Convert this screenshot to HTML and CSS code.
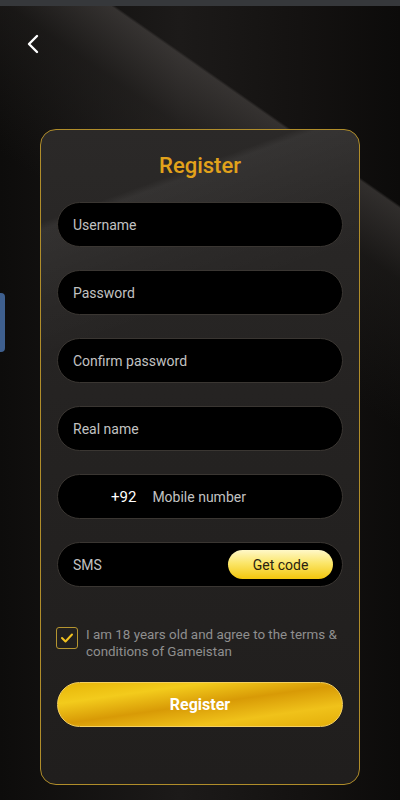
FILE: index.html
```html
<!DOCTYPE html>
<html>
<head>
<meta charset="utf-8">
<link rel="stylesheet" href="styles.css">
</head>
<body>
<div class="topstrip"></div>
<div class="page">
  <div class="header">
    <svg class="back" width="14" height="20" viewBox="0 0 14 20"><path d="M11 2 L3 10 L11 18" fill="none" stroke="#fff" stroke-width="2.4" stroke-linecap="round" stroke-linejoin="round"/></svg>
  </div>
  <div class="card">
    <h1 class="title">Register</h1>
    <div class="field"><span class="ph">Username</span></div>
    <div class="field"><span class="ph">Password</span></div>
    <div class="field"><span class="ph">Confirm password</span></div>
    <div class="field"><span class="ph">Real name</span></div>
    <div class="field"><span class="code">+92</span><span class="ph">Mobile number</span></div>
    <div class="field sms"><span class="ph">SMS</span><span class="getcode">Get code</span></div>
    <div class="agree">
      <span class="checkbox"><svg width="14" height="12" viewBox="0 0 14 12"><path d="M2 6 L5.5 9.5 L12 2.5" fill="none" stroke="#f0c020" stroke-width="2" stroke-linecap="round" stroke-linejoin="round"/></svg></span>
      <p class="terms">I am 18 years old and agree to the terms &amp; conditions of Gameistan</p>
    </div>
    <div class="submit">Register</div>
  </div>
</div>
<div class="sidetab"></div>
</body>
</html>
```
FILE: styles.css
```css
* { box-sizing: border-box; }
html, body { margin: 0; padding: 0; }
body {
  width: 400px;
  height: 800px;
  overflow: hidden;
  font-family: Roboto, "Liberation Sans", sans-serif;
  background:
    linear-gradient(215deg, rgba(0,0,0,0) 0%, rgba(0,0,0,0) 19%, rgba(78,74,72,0.55) 19.3%, rgba(50,47,45,0.3) 26%, rgba(0,0,0,0) 40%),
    linear-gradient(90deg, #0d0c0b 0%, #1c1a19 45%, #141211 75%, #0c0b0a 100%);
  position: relative;
}
.topstrip { height: 6px; background: #36383b; }
.page { display: flex; flex-direction: column; align-items: center; }
.header { width: 100%; height: 123px; padding: 28px 0 0 26px; }
.back { display: block; }
.card {
  width: 320px;
  height: 656px;
  border: 1px solid #b08d2a;
  border-radius: 16px;
  padding: 20px 16px 0 16px;
  display: flex;
  flex-direction: column;
  background:
    linear-gradient(160deg, rgba(255,255,255,0) 0%, rgba(255,255,255,0) 12%, rgba(255,255,255,0.05) 13%, rgba(255,255,255,0.02) 22%, rgba(255,255,255,0) 30%),
    linear-gradient(180deg, #2b2928 0%, #252322 40%, #201e1d 100%);
}
.title {
  margin: 0 0 20px;
  text-align: center;
  color: #e2a21b;
  font-size: 22px;
  font-weight: 500;
  line-height: 32px;
}
.field {
  height: 45px;
  border-radius: 23px;
  background: #000;
  border: 1px solid #3a3632;
  display: flex;
  align-items: center;
  padding: 0 8px 0 15px;
  margin-bottom: 23px;
  font-size: 14px;
}
.ph { color: #c2c2c2; }
.code { color: #fff; margin-left: 38px; margin-right: 16px; font-size: 15px; }
.sms { justify-content: space-between; }
.getcode {
  width: 105px;
  height: 29px;
  border-radius: 15px;
  background: linear-gradient(180deg, #fff8c8 0%, #fbe66a 45%, #f3c60c 100%);
  color: #2a2210;
  font-size: 14px;
  display: flex;
  align-items: center;
  justify-content: center;
  margin-right: 1px;
}
.agree { display: flex; align-items: flex-start; padding-top: 17px; gap: 8px; }
.checkbox {
  flex: none;
  width: 22px;
  height: 22px;
  border: 1.5px solid #b59530;
  border-radius: 3px;
  display: flex;
  align-items: center;
  justify-content: center;
  margin-left: -1px;
}
.terms {
  margin: -1px 0 0;
  color: #8f8f8f;
  font-size: 13.4px;
  line-height: 17px;
}
.submit {
  margin-top: 22px;
  height: 45px;
  border-radius: 23px;
  border: 1px solid #f5d060;
  background: linear-gradient(172deg, #e7b508 0%, #f3cb1c 25%, #d89a06 50%, #f0c21a 75%, #e3ae0a 100%);
  color: #fff;
  font-size: 16px;
  font-weight: 700;
  display: flex;
  align-items: center;
  justify-content: center;
}
.sidetab {
  position: absolute;
  left: 0;
  top: 293px;
  width: 5px;
  height: 59px;
  background: #3e5f8e;
  border-radius: 0 4px 4px 0;
}
```
